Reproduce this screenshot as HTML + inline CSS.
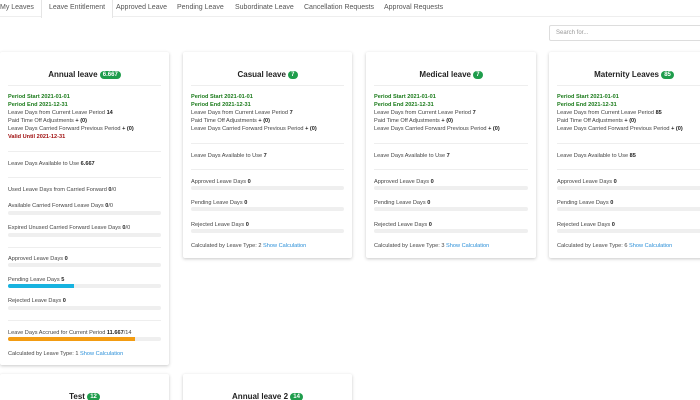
<!DOCTYPE html>
<html><head><meta charset="utf-8"><style>
*{margin:0;padding:0;box-sizing:border-box}
html,body{width:700px;height:400px;overflow:hidden}
body{background:#fff;font-family:"Liberation Sans",sans-serif;color:#333;position:relative}
.tabs{position:absolute;left:0;top:0;width:700px;height:17px;border-bottom:1px solid #eee}
.tab{position:absolute;top:0;height:17px;font-size:7px;line-height:16px;color:#555;white-space:nowrap}
.tab.act{border-left:1px solid #e5e5e5;border-right:1px solid #e5e5e5;background:#fff;height:18px;padding:0 7px}
.search{position:absolute;left:549px;top:25px;width:160px;height:16px;border:1px solid #ddd;border-radius:2px;font-size:6px;color:#999;line-height:14px;padding-left:6px}
.card{position:absolute;background:#fff;box-shadow:0 1px 3px rgba(0,0,0,.22);border-radius:2px}
.t{position:absolute;left:0;right:0;text-align:center;font-weight:bold;font-size:8px;color:#222;line-height:10px}
.b{display:inline-block;background:#1f9d4c;color:#fff;border-radius:5px;font-size:6px;line-height:8px;padding:0 3px;vertical-align:1px}
.hr{position:absolute;left:8px;right:8px;height:1px;background:#eee}
.l{position:absolute;left:8px;font-size:5.6px;line-height:8px;white-space:nowrap;color:#444}
.l b{color:#222}
.g{color:#1a7a1a;font-weight:bold}
.r{color:#a01010;font-weight:bold}
.bar{position:absolute;left:8px;right:8px;height:3.5px;background:#efefef;border-radius:2px;overflow:hidden}
.bar i{display:block;height:100%}
.a{color:#2a8fd8}
</style></head><body>
<div class="tabs">
<div class="tab" style="left:0">My Leaves</div>
<div class="tab act" style="left:41px">Leave Entitlement</div>
<div class="tab" style="left:116px">Approved Leave</div>
<div class="tab" style="left:177px">Pending Leave</div>
<div class="tab" style="left:235px">Subordinate Leave</div>
<div class="tab" style="left:304px">Cancellation Requests</div>
<div class="tab" style="left:384px">Approval Requests</div>
</div>
<div class="search">Search for...</div>

<div class="card" style="left:0;top:52px;width:169px;height:313px">
<div class="t" style="top:18px">Annual leave <span class="b">6.667</span></div>
<div class="hr" style="top:33px"></div>
<div class="l g" style="top:41px">Period Start 2021-01-01</div>
<div class="l g" style="top:49px">Period End 2021-12-31</div>
<div class="l" style="top:57px">Leave Days from Current Leave Period <b>14</b></div>
<div class="l" style="top:65px">Paid Time Off Adjustments <b>+ (0)</b></div>
<div class="l" style="top:73px">Leave Days Carried Forward Previous Period <b>+ (0)</b></div>
<div class="l r" style="top:81px">Valid Until 2021-12-31</div>
<div class="hr" style="top:99px"></div>
<div class="l" style="top:108px">Leave Days Available to Use <b>6.667</b></div>
<div class="hr" style="top:125px"></div>
<div class="l" style="top:134px">Used Leave Days from Carried Forward <b>0</b>/0</div>
<div class="l" style="top:150px">Available Carried Forward Leave Days <b>0</b>/0</div>
<div class="bar" style="top:159px"></div>
<div class="l" style="top:172px">Expired Unused Carried Forward Leave Days <b>0</b>/0</div>
<div class="bar" style="top:181px"></div>
<div class="hr" style="top:195px"></div>
<div class="l" style="top:203px">Approved Leave Days <b>0</b></div>
<div class="bar" style="top:211px"></div>
<div class="l" style="top:224px">Pending Leave Days <b>5</b></div>
<div class="bar" style="top:232px"><i style="width:43%;background:#17b3e0"></i></div>
<div class="l" style="top:245px">Rejected Leave Days <b>0</b></div>
<div class="bar" style="top:254px"></div>
<div class="hr" style="top:268px"></div>
<div class="l" style="top:277px">Leave Days Accrued for Current Period <b>11.667</b>/14</div>
<div class="bar" style="top:285px"><i style="width:83%;background:#f39c12"></i></div>
<div class="l" style="top:298px">Calculated by Leave Type: 1 <span class="a">Show Calculation</span></div>
</div>

<div class="card" style="left:183px;top:52px;width:169px;height:206px">
<div class="t" style="top:18px">Casual leave <span class="b">7</span></div>
<div class="hr" style="top:33px"></div>
<div class="l g" style="top:41px">Period Start 2021-01-01</div>
<div class="l g" style="top:49px">Period End 2021-12-31</div>
<div class="l" style="top:57px">Leave Days from Current Leave Period <b>7</b></div>
<div class="l" style="top:65px">Paid Time Off Adjustments <b>+ (0)</b></div>
<div class="l" style="top:73px">Leave Days Carried Forward Previous Period <b>+ (0)</b></div>
<div class="hr" style="top:91px"></div>
<div class="l" style="top:100px">Leave Days Available to Use <b>7</b></div>
<div class="hr" style="top:117px"></div>
<div class="l" style="top:126px">Approved Leave Days <b>0</b></div>
<div class="bar" style="top:134px"></div>
<div class="l" style="top:147px">Pending Leave Days <b>0</b></div>
<div class="bar" style="top:155px"></div>
<div class="l" style="top:169px">Rejected Leave Days <b>0</b></div>
<div class="bar" style="top:177px"></div>
<div class="l" style="top:190px">Calculated by Leave Type: 2 <span class="a">Show Calculation</span></div>
</div>

<div class="card" style="left:366px;top:52px;width:170px;height:206px">
<div class="t" style="top:18px">Medical leave <span class="b">7</span></div>
<div class="hr" style="top:33px"></div>
<div class="l g" style="top:41px">Period Start 2021-01-01</div>
<div class="l g" style="top:49px">Period End 2021-12-31</div>
<div class="l" style="top:57px">Leave Days from Current Leave Period <b>7</b></div>
<div class="l" style="top:65px">Paid Time Off Adjustments <b>+ (0)</b></div>
<div class="l" style="top:73px">Leave Days Carried Forward Previous Period <b>+ (0)</b></div>
<div class="hr" style="top:91px"></div>
<div class="l" style="top:100px">Leave Days Available to Use <b>7</b></div>
<div class="hr" style="top:117px"></div>
<div class="l" style="top:126px">Approved Leave Days <b>0</b></div>
<div class="bar" style="top:134px"></div>
<div class="l" style="top:147px">Pending Leave Days <b>0</b></div>
<div class="bar" style="top:155px"></div>
<div class="l" style="top:169px">Rejected Leave Days <b>0</b></div>
<div class="bar" style="top:177px"></div>
<div class="l" style="top:190px">Calculated by Leave Type: 3 <span class="a">Show Calculation</span></div>
</div>

<div class="card" style="left:549px;top:52px;width:170px;height:206px">
<div class="t" style="top:18px">Maternity Leaves <span class="b">85</span></div>
<div class="hr" style="top:33px"></div>
<div class="l g" style="top:41px">Period Start 2021-01-01</div>
<div class="l g" style="top:49px">Period End 2021-12-31</div>
<div class="l" style="top:57px">Leave Days from Current Leave Period <b>85</b></div>
<div class="l" style="top:65px">Paid Time Off Adjustments <b>+ (0)</b></div>
<div class="l" style="top:73px">Leave Days Carried Forward Previous Period <b>+ (0)</b></div>
<div class="hr" style="top:91px"></div>
<div class="l" style="top:100px">Leave Days Available to Use <b>85</b></div>
<div class="hr" style="top:117px"></div>
<div class="l" style="top:126px">Approved Leave Days <b>0</b></div>
<div class="bar" style="top:134px"></div>
<div class="l" style="top:147px">Pending Leave Days <b>0</b></div>
<div class="bar" style="top:155px"></div>
<div class="l" style="top:169px">Rejected Leave Days <b>0</b></div>
<div class="bar" style="top:177px"></div>
<div class="l" style="top:190px">Calculated by Leave Type: 6 <span class="a">Show Calculation</span></div>
</div>

<div class="card" style="left:0;top:374px;width:169px;height:30px">
<div class="t" style="top:18px">Test <span class="b">12</span></div>
</div>
<div class="card" style="left:183px;top:374px;width:169px;height:30px">
<div class="t" style="top:18px">Annual leave 2 <span class="b">14</span></div>
</div>
</body></html>
